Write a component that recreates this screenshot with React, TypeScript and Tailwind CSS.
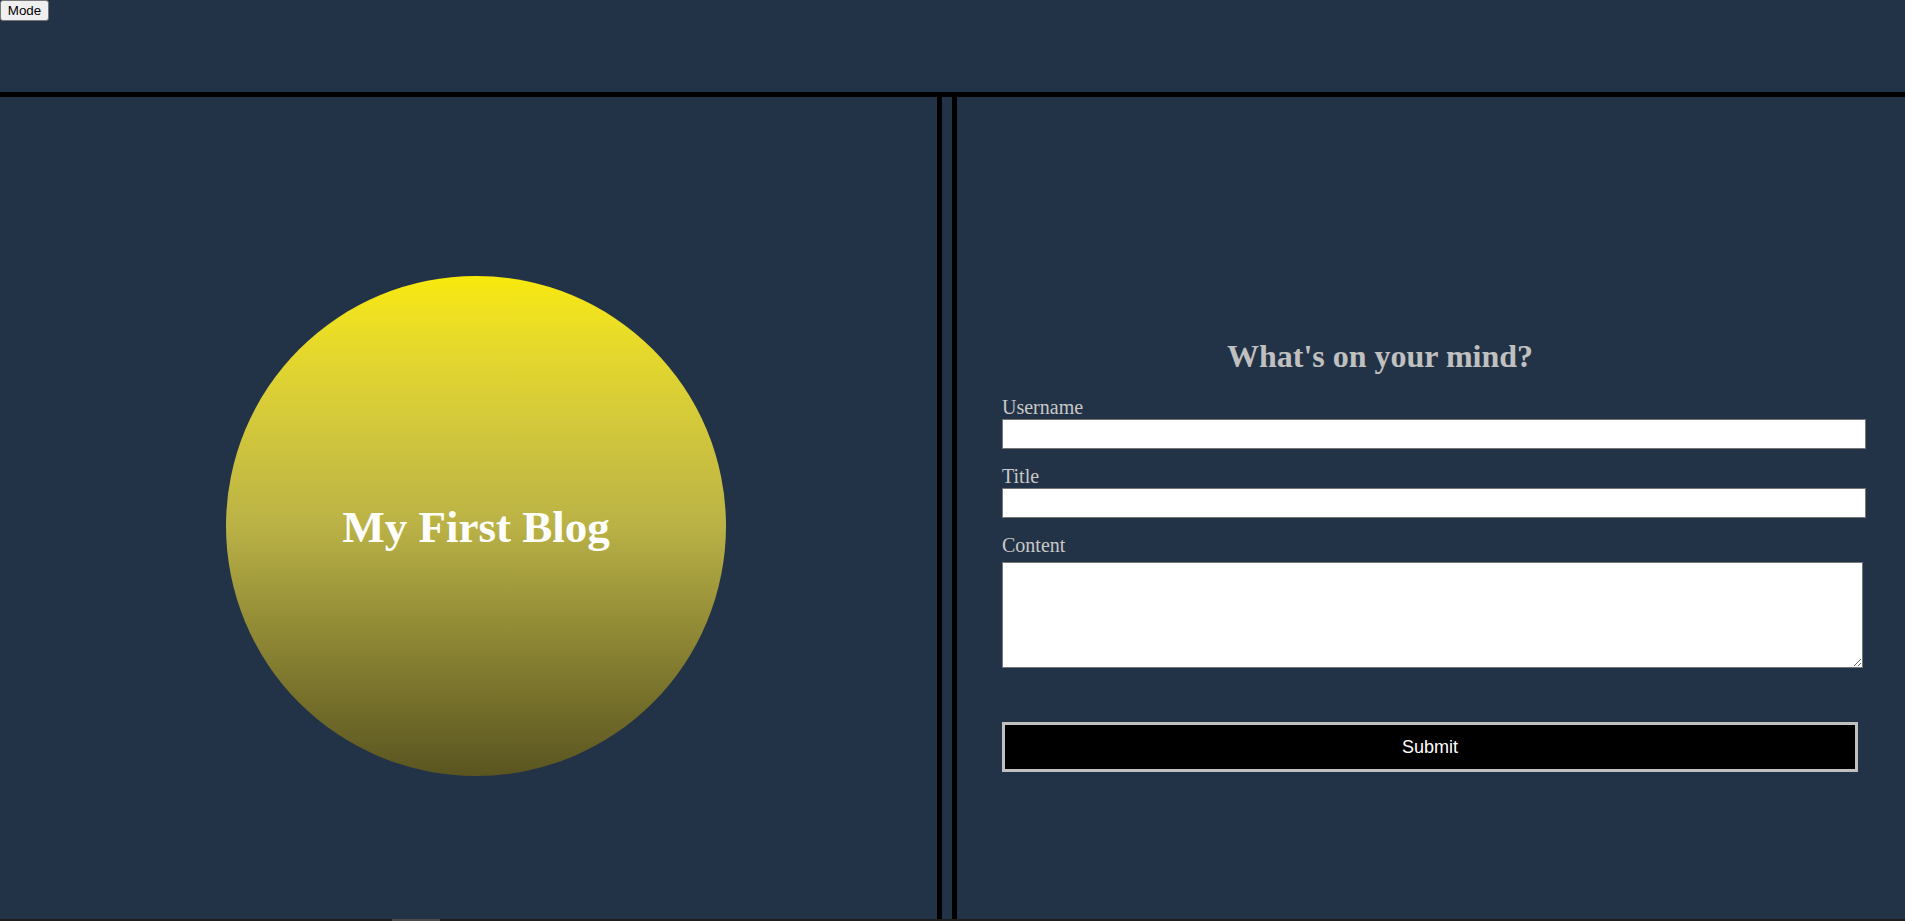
export default function App() {
  return (
    <div className="h-[921px] w-full overflow-hidden bg-[#233347] flex flex-col font-['Liberation_Serif',serif]">
      {/* Top bar */}
      <header className="h-[97px] shrink-0 border-b-[5px] border-black">
        <button className="block w-[49px] bg-[#efefef] border border-[#767676] rounded-[3px] py-[1px] text-[13.33px] leading-[17px] text-black font-['Liberation_Sans',Arial,sans-serif]">
          Mode
        </button>
      </header>

      {/* Panels */}
      <main className="flex flex-1 min-h-0">
        {/* Left: circle */}
        <section className="w-[942px] shrink-0 border-r-[5px] border-black flex items-center justify-center pl-[15px] pt-[36px]">
          <div className="w-[500px] h-[500px] rounded-full bg-gradient-to-b from-[#f8e90a] via-[#bab246] to-[#5a5520] flex items-center justify-center">
            <h1 className="text-white font-bold text-[45px] leading-[52px] mt-[2px]">My First Blog</h1>
          </div>
        </section>

        <div className="w-[10px] shrink-0" />

        {/* Right: form */}
        <section className="flex-1 border-l-[5px] border-black pl-[45px] pr-[39px] pt-[241px]">
          <h2 className="text-[#c0c0c0] font-bold text-[32px] leading-[36px] text-center pr-[108px]">
            What's on your mind?
          </h2>
          <form className="mt-[22px] flex flex-col" onSubmit={(e) => e.preventDefault()}>
            <label className="text-[#c8c8c8] text-[20px] leading-[23px]">Username</label>
            <input className="h-[30px] w-[864px] bg-white border border-[#767676]" type="text" />

            <label className="mt-[16px] text-[#c8c8c8] text-[20px] leading-[23px]">Title</label>
            <input className="h-[30px] w-[864px] bg-white border border-[#767676]" type="text" />

            <label className="mt-[16px] text-[#c8c8c8] text-[20px] leading-[23px]">Content</label>
            <textarea className="mt-[5px] h-[106px] w-[861px] bg-white border border-[#767676]" />

            <button
              type="submit"
              className="mt-[54px] h-[50px] w-[856px] bg-black border-[3px] border-[#c0c0c0] text-white text-[18px] font-['Liberation_Sans',Arial,sans-serif]"
            >
              Submit
            </button>
          </form>
        </section>
      </main>

      {/* bottom scrollbar strip */}
      <div className="h-[2px] shrink-0 bg-[#1e1e1e] flex">
        <div className="ml-[392px] w-[48px] bg-[#4a4a4a]" />
      </div>
    </div>
  )
}
